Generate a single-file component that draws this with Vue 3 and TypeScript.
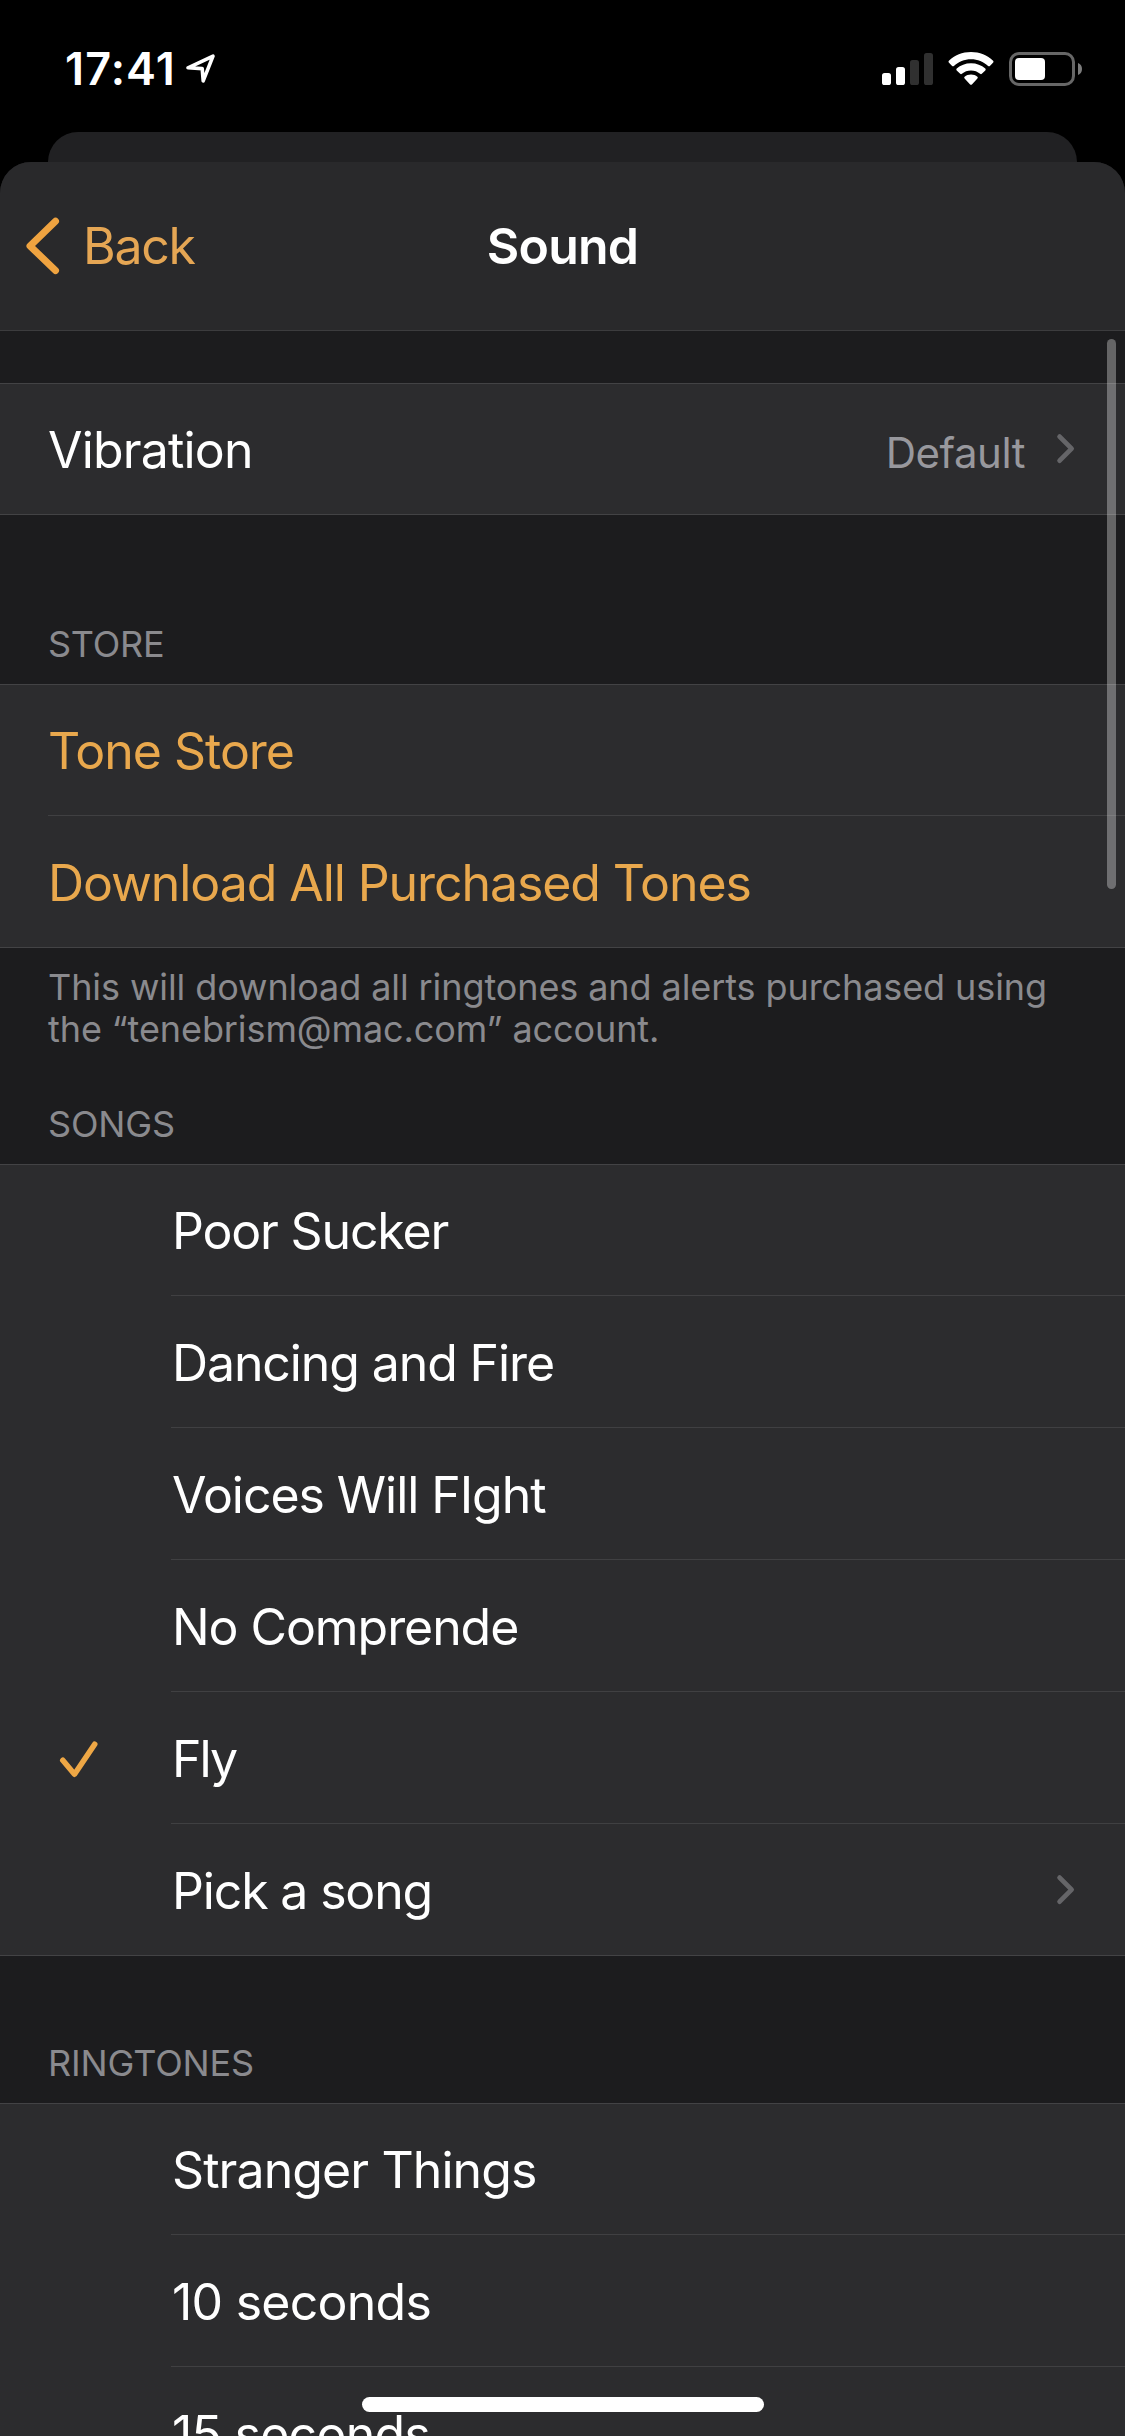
<script setup lang="ts">
interface Row {
  label: string
  tracking: number
  value?: string
  checked?: boolean
  link?: boolean
  disclosure?: boolean
}

interface Section {
  id: string
  header?: string
  headerTracking?: number
  rows: Row[]
  footer?: string
  indented?: boolean
}

const sections: Section[] = [
  {
    id: 'vibration',
    rows: [{ label: 'Vibration', tracking: -0.82, value: 'Default', disclosure: true }],
  },
  {
    id: 'store',
    header: 'STORE',
    headerTracking: -0.24,
    rows: [
      { label: 'Tone Store', tracking: -1.02, link: true },
      { label: 'Download All Purchased Tones', tracking: -1.08, link: true },
    ],
    footer: 'This will download all ringtones and alerts purchased using the “tenebrism@mac.com” account.',
  },
  {
    id: 'songs',
    header: 'SONGS',
    headerTracking: -0.15,
    indented: true,
    rows: [
      { label: 'Poor Sucker', tracking: -1.18 },
      { label: 'Dancing and Fire', tracking: -1.11 },
      { label: 'Voices Will FIght', tracking: -1.05 },
      { label: 'No Comprende', tracking: -1.07 },
      { label: 'Fly', tracking: -1.9, checked: true },
      { label: 'Pick a song', tracking: -1.16, disclosure: true },
    ],
  },
  {
    id: 'ringtones',
    header: 'RINGTONES',
    headerTracking: -0.15,
    indented: true,
    rows: [
      { label: 'Stranger Things', tracking: -0.91 },
      { label: '10 seconds', tracking: -0.75 },
      { label: '15 seconds', tracking: -0.75 },
    ],
  },
]
</script>

<template>
  <div class="screen">
    <header class="status">
      <div class="clock">
        <span class="time">17:41</span>
        <svg class="location" width="32" height="32" viewBox="0 0 32 32">
          <path d="M3 14.8 28 3.2 18.2 27.8 17.2 15.6Z" fill="none" stroke="#fff" stroke-width="3.6" stroke-linejoin="round" />
        </svg>
      </div>
      <div class="indicators">
        <svg width="51" height="34" viewBox="0 0 51 34">
          <rect x="0" y="21" width="9" height="12" rx="2.6" fill="#fff" />
          <rect x="14" y="15" width="9" height="18" rx="2.6" fill="#fff" />
          <rect x="28" y="8" width="9" height="25" rx="2.6" fill="#303030" />
          <rect x="42" y="1" width="9" height="32" rx="2.6" fill="#303030" />
        </svg>
        <svg class="wifi" width="46" height="34" viewBox="0 0 46 34">
          <path d="M23 0C14.4 0 6.600 3.300 .9 8.700Q0 9.600 .8 10.500L4.100 13.900Q5 14.700 5.900 13.900C10.400 9.700 16.400 7.200 23 7.200S35.600 9.700 40.100 13.900Q41 14.700 41.900 13.900L45.200 10.500Q46 9.600 45.100 8.700C39.400 3.300 31.600 0 23 0Z" fill="#fff" />
          <path d="M23 11.200C17.500 11.200 12.500 13.200 8.700 16.600Q7.800 17.500 8.700 18.400L12.200 21.800Q13 22.500 13.900 21.800C16.400 19.600 19.500 18.400 23 18.400S29.600 19.600 32.100 21.800Q33 22.500 33.800 21.800L37.300 18.400Q38.200 17.500 37.300 16.600C33.500 13.200 28.500 11.200 23 11.200Z" fill="#fff" />
          <path d="M23 22.500C20.500 22.500 18.300 23.300 16.600 24.700Q15.700 25.500 16.600 26.400L22.100 32.400Q23 33.300 23.900 32.400L29.400 26.400Q30.300 25.500 29.400 24.700C27.700 23.300 25.500 22.500 23 22.500Z" fill="#fff" />
        </svg>
        <svg class="battery" width="74" height="34" viewBox="0 0 74 34">
          <rect x="1.500" y="1.500" width="63" height="31" rx="8.500" fill="none" stroke="#676767" stroke-width="3" />
          <rect x="6" y="6" width="30" height="22" rx="4" fill="#fff" />
          <path d="M69 11C71.600 12 73 14.300 73 17S71.600 22 69 23Z" fill="#7c7c7c" />
        </svg>
      </div>
    </header>

    <div class="sheet-behind"></div>

    <main class="sheet">
      <nav class="nav">
        <div class="back">
          <svg width="38" height="60" viewBox="0 0 38 60">
            <path d="M31.500 5.200 6 29.900 31.500 54.600" fill="none" stroke="#efa340" stroke-width="7" stroke-linecap="round" stroke-linejoin="round" />
          </svg>
          <span>Back</span>
        </div>
        <h1 class="title">Sound</h1>
      </nav>

      <section v-for="section in sections" :key="section.id" class="section" :class="[section.id, { indented: section.indented }]">
        <h2 v-if="section.header" class="section-header" :style="{ letterSpacing: section.headerTracking + 'px' }">
          {{ section.header }}
        </h2>
        <div class="group">
          <div v-for="row in section.rows" :key="row.label" class="row">
            <div v-if="section.indented" class="mark">
              <svg v-if="row.checked" width="42" height="40" viewBox="0 0 42 40">
                <path d="M4.800 20.300 16.500 34.200 36.700 4.300" fill="none" stroke="#eea745" stroke-width="5.600" stroke-linecap="round" stroke-linejoin="round" />
              </svg>
            </div>
            <div class="row-body">
              <div class="texts">
                <span class="label" :class="{ link: row.link }" :style="{ letterSpacing: row.tracking + 'px' }">{{ row.label }}</span>
                <span v-if="row.value" class="value">{{ row.value }}</span>
              </div>
              <svg v-if="row.disclosure" class="chevron" width="20" height="32" viewBox="0 0 20 32">
                <path d="M3.600 3.600 15.600 15.600 3.600 27.600" fill="none" stroke="#656568" stroke-width="4.800" stroke-linecap="round" stroke-linejoin="round" />
              </svg>
            </div>
          </div>
        </div>
        <p v-if="section.footer" class="section-footer">{{ section.footer }}</p>
      </section>
    </main>

    <div class="scrollbar"></div>
    <div class="home-indicator"></div>
  </div>
</template>

<style>
body {
  margin: 0;
  background: #000;
}
</style>

<style scoped>
.screen {
  position: relative;
  display: flex;
  flex-direction: column;
  width: 1125px;
  height: 2436px;
  overflow: hidden;
  background: #000;
  color: #fff;
  font-family: Inter, "Liberation Sans", sans-serif;
}

.status {
  flex: none;
  box-sizing: border-box;
  height: 132px;
  padding: 42px 42px 0 65px;
  display: flex;
  justify-content: space-between;
  align-items: flex-start;
}

.clock {
  display: flex;
  align-items: center;
}

.time {
  font-size: 45px;
  font-weight: 600;
  line-height: 54px;
  letter-spacing: 1.1px;
}

.location {
  margin-left: 9px;
}

.indicators {
  display: flex;
  padding-top: 10px;
}

.wifi {
  margin-left: 15px;
}

.battery {
  margin-left: 15px;
}

.sheet-behind {
  flex: none;
  height: 30px;
  margin: 0 48px;
  border-radius: 30px 30px 0 0;
  background: #212123;
}

.sheet {
  flex: 1;
  min-height: 0;
  overflow: hidden;
  border-radius: 31px 31px 0 0;
  background: #1c1c1e;
}

.nav {
  box-sizing: border-box;
  height: 169px;
  border-bottom: 1px solid #3c3c3e;
  background: #29292b;
  display: grid;
  grid-template-columns: 1fr auto 1fr;
  align-items: center;
  font-size: 50px;
  line-height: 60px;
}

.back {
  display: flex;
  align-items: center;
  padding-left: 24px;
  color: #e5a654;
  letter-spacing: -1.300px;
}

.back svg {
  margin-right: 21px;
}

.title {
  margin: 0;
  font-size: 50px;
  font-weight: 600;
  letter-spacing: -0.790px;
}

.section.vibration {
  padding-top: 52px;
}

.section-header {
  box-sizing: border-box;
  display: flex;
  align-items: flex-end;
  height: 169px;
  margin: 0;
  padding: 0 48px 18px;
  font-size: 36px;
  font-weight: 400;
  line-height: 44px;
  color: #8a8a8e;
}

.songs .section-header {
  height: 114px;
}

.ringtones .section-header {
  height: 147px;
}

.group {
  background: #2c2c2e;
  box-shadow: inset 0 1px 0 #434345;
}

.row {
  display: flex;
  height: 132px;
  padding-left: 48px;
}

.mark {
  flex: none;
  box-sizing: border-box;
  width: 123px;
  padding: 3px 0 0 10px;
  display: flex;
  align-items: center;
}

.row-body {
  flex: 1;
  box-sizing: border-box;
  display: flex;
  align-items: center;
  border-bottom: 1px solid #404042;
  padding-right: 49px;
}

.row:last-child {
  box-shadow: inset 0 -1px 0 #434345;
}

.row:last-child .row-body {
  border-bottom-color: #434345;
}

.texts {
  flex: 1;
  display: flex;
  align-items: baseline;
  justify-content: space-between;
  padding-top: 3px;
}

.indented .texts {
  padding-left: 1px;
}

.label {
  font-size: 50px;
  line-height: 60px;
  white-space: nowrap;
}

.label.link {
  color: #e9a84d;
}

.value {
  font-size: 42px;
  line-height: 50px;
  letter-spacing: -0.480px;
  color: #98989d;
}

.chevron {
  margin-left: 31px;
}

.section-footer {
  margin: 0;
  padding: 18px 60px 0 48px;
  font-size: 36px;
  line-height: 42px;
  letter-spacing: -0.090px;
  color: #8a8a8e;
}

.scrollbar {
  position: absolute;
  top: 339px;
  right: 9px;
  width: 9px;
  height: 550px;
  border-radius: 5px;
  background: rgba(255, 255, 255, 0.32);
}

.home-indicator {
  position: absolute;
  left: 362px;
  bottom: 24px;
  width: 402px;
  height: 15px;
  border-radius: 8px;
  background: #fff;
}
</style>
